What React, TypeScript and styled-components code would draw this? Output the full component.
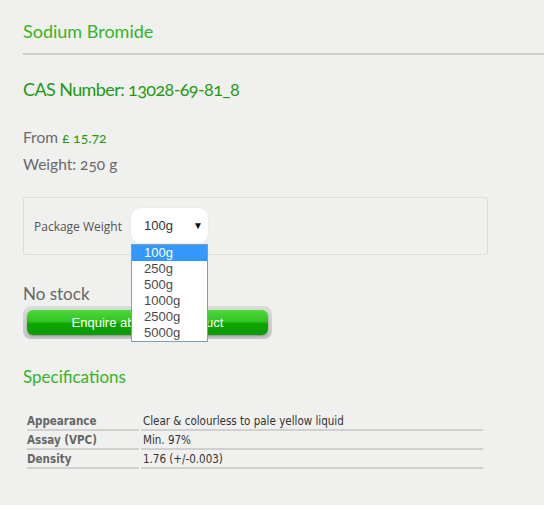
import styled, { createGlobalStyle } from 'styled-components';

const GlobalStyle = createGlobalStyle`
  html, body {
    margin: 0;
    padding: 0;
    background: #f0f0ee;
  }
`;

type Spec = { label: string; value: string };

const specs: Spec[] = [
  { label: 'Appearance', value: 'Clear & colourless to pale yellow liquid' },
  { label: 'Assay (VPC)', value: 'Min. 97%' },
  { label: 'Density', value: '1.76 (+/-0.003)' },
];

const weights = ['100g', '250g', '500g', '1000g', '2500g', '5000g'];

const App = () => {
  return (
    <Page>
      <GlobalStyle />
      <Title>Sodium Bromide</Title>
      <Divider />
      <CasNumber>CAS Number: 13028-69-81_8</CasNumber>
      <PriceBlock>
        <PriceLine>
          From <Price>£ 15.72</Price>
        </PriceLine>
        <PriceLine>Weight: 250 g</PriceLine>
      </PriceBlock>

      <PackageBox>
        <PackageLabel>Package Weight</PackageLabel>
        <SelectWrapper>
          <Select>
            <span>100g</span>
            <Arrow>▼</Arrow>
          </Select>
          <Options>
            {weights.map((w, i) => (
              <Option key={w} $active={i === 0}>
                {w}
              </Option>
            ))}
          </Options>
        </SelectWrapper>
      </PackageBox>

      <Stock>No stock</Stock>
      <ButtonTrack>
        <EnquireButton>Enquire about this product</EnquireButton>
      </ButtonTrack>

      <SubTitle>Specifications</SubTitle>
      <SpecTable>
        <tbody>
          {specs.map((s) => (
            <tr key={s.label}>
              <SpecLabel>{s.label}</SpecLabel>
              <SpecValue>{s.value}</SpecValue>
            </tr>
          ))}
        </tbody>
      </SpecTable>
    </Page>
  );
};

const Page = styled.div`
  padding: 19px 0 40px 23px;
  font-family: Lato, 'Open Sans', sans-serif;
  font-variant-numeric: oldstyle-nums;
  color: #666;
`;

const Title = styled.h1`
  margin: 0;
  font-size: 18px;
  line-height: 24px;
  font-weight: 400;
  color: #35b51f;
`;

const Divider = styled.div`
  height: 2px;
  background: #cdcdcb;
  margin-top: 10px;
`;

const CasNumber = styled.h2`
  margin: 22px 0 0;
  font-size: 18px;
  line-height: 24px;
  font-weight: 400;
  letter-spacing: -0.6px;
  color: #1f9a12;
`;

const PriceBlock = styled.div`
  margin-top: 23px;
`;

const PriceLine = styled.div`
  font-size: 15.5px;
  line-height: 26px;
  color: #6a6a6a;
`;

const Price = styled.span`
  font-size: 14px;
  color: #1f9a12;
`;

const PackageBox = styled.div`
  margin-top: 20px;
  width: 465px;
  height: 58px;
  box-sizing: border-box;
  border: 1px solid #dededc;
  border-radius: 2px;
  display: flex;
  align-items: center;
  padding-left: 10px;
`;

const PackageLabel = styled.span`
  font-family: 'Open Sans', sans-serif;
  font-size: 12px;
  color: #555;
  width: 97px;
`;

const SelectWrapper = styled.div`
  position: relative;
  margin-top: -2px;
`;

const Select = styled.div`
  width: 77px;
  height: 35px;
  box-sizing: border-box;
  background: #fff;
  border-radius: 9px;
  box-shadow: 0 0 2px rgba(0, 0, 0, 0.08);
  display: flex;
  align-items: center;
  justify-content: space-between;
  padding: 0 5px 0 13px;
  font-family: 'Liberation Sans', Arial, sans-serif;
  font-size: 13px;
  color: #333;
`;

const Arrow = styled.span`
  font-size: 10px;
  color: #111;
`;

const Options = styled.div`
  position: absolute;
  top: 36px;
  left: 0;
  width: 77px;
  box-sizing: border-box;
  border: 1px solid #7f9db9;
  background: #fff;
  z-index: 2;
`;

const Option = styled.div<{ $active: boolean }>`
  height: 16px;
  line-height: 16px;
  padding-left: 12px;
  font-family: 'Liberation Sans', Arial, sans-serif;
  font-size: 13px;
  background: ${({ $active }) => ($active ? '#3399ff' : '#fff')};
  color: ${({ $active }) => ($active ? '#fff' : '#4a4a4a')};
`;

const Stock = styled.div`
  margin-top: 29px;
  font-size: 17px;
  line-height: 20px;
  color: #666;
`;

const ButtonTrack = styled.div`
  margin-top: 2px;
  width: 249px;
  height: 33px;
  box-sizing: border-box;
  padding: 4px;
  border-radius: 8px;
  background: linear-gradient(#dcdcdc, #c4c4c4);
`;

const EnquireButton = styled.button`
  width: 100%;
  height: 25px;
  border: none;
  border-radius: 6px;
  background: linear-gradient(#4ed93b 0%, #32c523 45%, #0ea501 55%, #0a9a00 100%);
  box-shadow: 0 1px 2px rgba(0, 0, 0, 0.3);
  color: #fff;
  font-family: 'Liberation Sans', Arial, sans-serif;
  font-size: 13px;
  cursor: pointer;
`;

const SubTitle = styled.h3`
  margin: 28px 0 0;
  font-size: 17px;
  line-height: 20px;
  font-weight: 400;
  color: #35b51f;
`;

const SpecTable = styled.table`
  margin: 25px 0 0 2px;
  width: 460px;
  border-collapse: separate;
  border-spacing: 2px 0;
  font-family: 'DejaVu Sans Condensed', 'DejaVu Sans', Verdana, sans-serif;
  font-size: 11.5px;
`;

const SpecLabel = styled.td`
  width: 112px;
  height: 16px;
  padding: 1px 0 0;
  font-weight: 700;
  color: #666;
  border-bottom: 2px solid #d0d0ce;
`;

const SpecValue = styled.td`
  padding: 1px 0 0 2px;
  color: #333;
  border-bottom: 2px solid #d0d0ce;
`;

export default App;
